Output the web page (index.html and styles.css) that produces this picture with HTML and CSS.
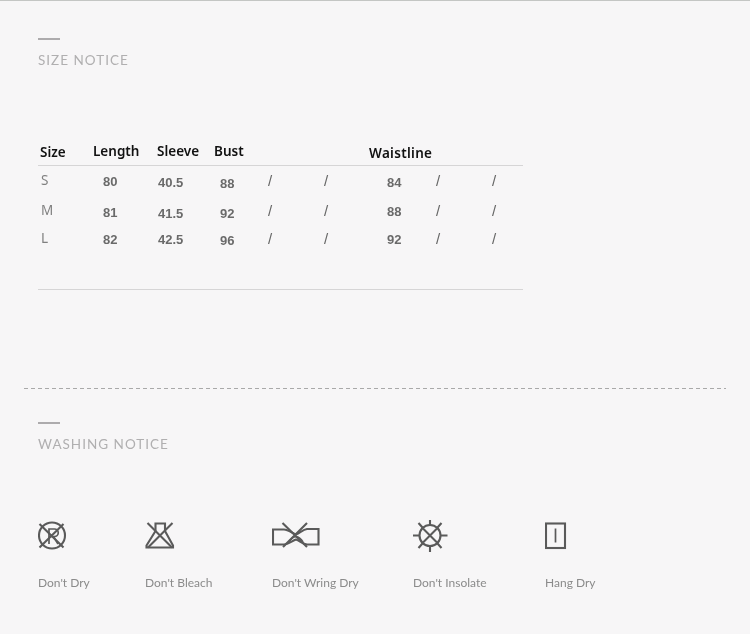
FILE: index.html
```html
<!DOCTYPE html>
<html lang="en">
<head>
<meta charset="utf-8">
<title>Size and washing notice</title>
<link rel="stylesheet" href="styles.css">
</head>
<body>
<div class="page">
  <section class="size">
    <div class="bar"></div>
    <h2 class="title">SIZE NOTICE</h2>
    <div class="table">
      <div class="thead">
        <span class="th d1">Size</span><span class="th">Length</span><span class="th">Sleeve</span><span class="th">Bust</span><span class="th d2 wide">Waistline</span>
      </div>
      <div class="trow r1">
        <span class="lab">S</span><span class="num d2">80</span><span class="num d3">40.5</span><span class="num d4">88</span><span class="sl d1">/</span><span class="sl d1">/</span><span class="num d3">84</span><span class="sl d1">/</span><span class="sl d1">/</span>
      </div>
      <div class="trow r2">
        <span class="lab">M</span><span class="num d3">81</span><span class="num d4">41.5</span><span class="num d4">92</span><span class="sl d1">/</span><span class="sl d1">/</span><span class="num d2">88</span><span class="sl d1">/</span><span class="sl d1">/</span>
      </div>
      <div class="trow r3">
        <span class="lab">L</span><span class="num d2">82</span><span class="num d2">42.5</span><span class="num d3">96</span><span class="sl d1">/</span><span class="sl d1">/</span><span class="num d2">92</span><span class="sl d1">/</span><span class="sl d1">/</span>
      </div>
    </div>
  </section>
  <div class="dash"></div>
  <section class="wash">
    <div class="bar"></div>
    <h2 class="title">WASHING NOTICE</h2>
    <div class="care">
      <figure class="item">
        <svg class="ico" width="30" height="30" viewBox="0 0 30 30"><circle cx="14" cy="15.500" r="13"/><path d="M1.500 4 25.500 27.500M25.500 4 1.500 27.500"/><path class="thin" d="M11 24V9h5.500a3.700 3.700 0 0 1 0 7.500H11M15.500 16.500 20 24"/></svg>
        <figcaption class="cap">Don't Dry</figcaption>
      </figure>
      <figure class="item">
        <svg class="ico" width="30" height="30" viewBox="0 0 30 30"><path d="M10.500 3.500H20V11L28 25.500V27.500H1.500V25.500L10.500 11Z"/><path d="M2.500 3 27 27.500M27.500 3 3 27.500"/></svg>
        <figcaption class="cap">Don't Bleach</figcaption>
      </figure>
      <figure class="item">
        <svg class="ico" width="48" height="30" viewBox="0 0 48 30"><path d="M1 9.500H12C16 9.500 20 13 24 14.500 28 13 31 9.500 35 9H46.500V24.500H35C31 24 28 21 24 19.500 20 21 16 24.500 12 24.500H1Z"/><path d="M10.500 3 35 27M35 3 11 27"/><path class="thin" d="M17 22 C21 15 27 15 31 22"/></svg>
        <figcaption class="cap">Don't Wring Dry</figcaption>
      </figure>
      <figure class="item">
        <svg class="ico" width="35" height="33" viewBox="0 0 35 33"><circle cx="17" cy="15.500" r="10.500"/><path d="M10 8.500 24 22.500M24 8.500 10 22.500"/><path d="M0 15.500H6.500M27.500 15.500H34.500M17 0V5M17 26V32M5.500 3 9.500 7.500M28.500 3 24.500 7.500M5.500 28 9.500 23.500M28.500 28 24.500 23.500"/></svg>
        <figcaption class="cap">Don't Insolate</figcaption>
      </figure>
      <figure class="item">
        <svg class="ico" width="30" height="30" viewBox="0 0 30 30"><rect x="1" y="3.500" width="19" height="24.500"/><path class="thin" d="M10.500 8.500V22.500"/></svg>
        <figcaption class="cap">Hang Dry</figcaption>
      </figure>
    </div>
  </section>
</div>
</body>
</html>
```
FILE: styles.css
```css
* { box-sizing: border-box; }
html, body { margin: 0; padding: 0; }
body { background: #f7f6f7; font-family: "Liberation Sans", Arial, sans-serif; }
.page {
  width: 750px;
  height: 634px;
  overflow: hidden;
  border-top: 1px solid #c4c6c4;
}
.size { padding: 37px 0 0 38px; height: 387px; }
.wash { padding: 33px 0 0 38px; }
.bar { width: 22px; height: 2px; background: #adabad; }
.title {
  margin: 12px 0 0;
  font: 400 13.5px/16px Lato, sans-serif;
  letter-spacing: 1px;
  color: #b0afb0;
  filter: blur(0.3px);
}
.table { width: 485px; margin-top: 75px; }
.thead {
  display: grid;
  grid-template-columns: 53px 64px 57px 155px auto;
  padding: 0 0 0 2px;
  height: 23px;
  border-bottom: 1px solid #d6d5d6;
}
.th {
  font: 600 13.5px/16px "Noto Sans", sans-serif;
  color: #111;
  filter: blur(0.25px);
}
.wide { letter-spacing: 0.3px; }
.trow {
  display: grid;
  grid-template-columns: 62px 55px 62px 47px 56px 64px 48px 56px 30px;
  padding-left: 3px;
  align-items: start;
}
.r1 { height: 30px; margin-top: 7px; }
.r2 { height: 28px; }
.r3 { height: 59px; border-bottom: 1px solid #d6d5d6; }
.lab { font: 400 13.5px/14px "Noto Sans", sans-serif; color: #808080; filter: blur(0.3px); }
.num { font: 700 13px/14px "Liberation Sans", sans-serif; color: #6a6a6a; filter: blur(0.3px); }
.sl { font: 400 15px/14px "Liberation Sans", sans-serif; color: #666; padding-left: 1px; filter: blur(0.2px); }
.d1 { margin-top: 1px; }
.d2 { margin-top: 2px; }
.d3 { margin-top: 3px; }
.d4 { margin-top: 4px; }
.dash {
  margin-left: 24px;
  width: 702px;
  height: 1px;
  background: repeating-linear-gradient(90deg, #a9a9a9 0 4px, transparent 4px 7px);
}
.care {
  display: grid;
  grid-template-columns: 107px 127px 141px 132px auto;
  margin-top: 68px;
}
.item {
  margin: 0;
  display: grid;
  grid-template-rows: 33px auto;
}
.ico {
  display: block;
  fill: none;
  stroke: #5a5a5a;
  stroke-width: 2.1;
  filter: blur(0.25px);
}
.ico .thin { stroke-width: 1.7; }
.cap {
  margin-top: 23px;
  font: 400 12px/14px Lato, sans-serif;
  color: #8b8b8b;
  white-space: nowrap;
  filter: blur(0.25px);
}
```
